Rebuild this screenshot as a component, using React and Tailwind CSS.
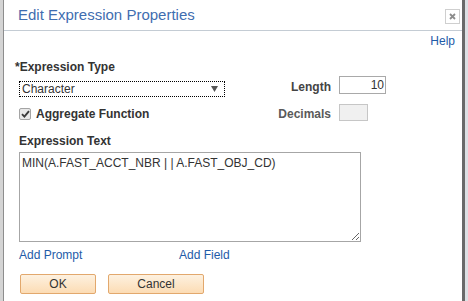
import React from "react";

const CloseBox = () => (
  <div className="mt-[9px] flex h-[15px] w-[15px] items-center justify-center border border-[#cfcfcf] bg-white">
    <svg width="7" height="7" viewBox="0 0 7 7">
      <path d="M1 1L6 6M6 1L1 6" stroke="#8c8c8c" strokeWidth="1.8" />
    </svg>
  </div>
);

const Checkbox = () => (
  <div className="flex h-[12px] w-[12px] items-center justify-center rounded-[2px] border border-[#a4a4a4] bg-[#e8e8e8]">
    <svg width="9" height="8" viewBox="0 0 9 8">
      <path d="M1 4.2L3.4 6.6L8 1.2" stroke="#3a3a3a" strokeWidth="1.9" fill="none" />
    </svg>
  </div>
);

const App = () => {
  return (
    <div className="flex h-[301px] w-[468px] bg-white font-['Liberation_Sans',Arial,sans-serif] text-[12px] text-[#333]">
      <div className="w-[3px] bg-[#d4d4d4]" />
      <div className="flex flex-1 flex-col border-l border-r-[3px] border-l-[#8d8d8d] border-r-[#6a6a6a] bg-white">
        {/* title bar */}
        <div className="flex h-[31px] items-start justify-between border-b border-[#c4ccd4] pl-[14px] pr-[2px]">
          <div className="pt-[6px] text-[15px] leading-[18px] text-[#3f6db0]">
            Edit Expression Properties
          </div>
          <CloseBox />
        </div>

        <div className="flex flex-col pl-[11px] pr-[7px]">
          <div className="mt-[3px] flex justify-end leading-[14px]">
            <a className="cursor-pointer text-[#1e5ba8]">Help</a>
          </div>

          <div className="mt-[12px] flex">
            <div className="w-[214px]">
              <div className="font-bold leading-[14px] text-[#333]">*Expression Type</div>
              <div className="ml-[4px] mt-[7px] flex h-[16px] w-[206px] items-center justify-between border border-dotted border-black pl-[2px] pr-[6px] leading-[14px]">
                <span>Character</span>
                <svg width="7" height="6" viewBox="0 0 7 6">
                  <path d="M0 0H7L3.5 6Z" fill="#555" />
                </svg>
              </div>
              <div className="ml-[4px] mt-[11px] flex h-[12px] items-center gap-[5px]">
                <Checkbox />
                <span className="font-bold leading-[14px] text-[#333]">Aggregate Function</span>
              </div>
            </div>

            <div className="flex flex-col">
              <div className="mt-[16px] flex items-end">
                <span className="w-[102px] text-right font-bold leading-[14px] text-[#444]">Length</span>
                <div className="ml-[8px] flex h-[18px] w-[47px] items-center justify-end border border-[#a9a9a9] pr-[1px] leading-[14px]">
                  10
                </div>
              </div>
              <div className="mt-[10px] flex items-end">
                <span className="w-[102px] text-right font-bold leading-[14px] text-[#5a5a5a]">Decimals</span>
                <div className="ml-[8px] h-[17px] w-[29px] border border-[#c6c6c6] bg-[#f0f0f0]" />
              </div>
            </div>
          </div>

          <div className="ml-[4px] mt-[13px] font-bold leading-[14px] text-[#333]">Expression Text</div>
          <textarea
            readOnly
            defaultValue="MIN(A.FAST_ACCT_NBR | | A.FAST_OBJ_CD)"
            className="ml-[4px] mt-[4px] h-[90px] w-[342px] border border-[#a6a6a6] px-[2px] py-[3px] text-[12px] leading-[14px] text-[#333] outline-none"
          />

          <div className="ml-[4px] mt-[6px] flex leading-[14px] text-[#1e5ba8]">
            <a className="w-[160px] cursor-pointer">Add Prompt</a>
            <a className="cursor-pointer">Add Field</a>
          </div>

          <div className="ml-[5px] mt-[12px] flex gap-[12px]">
            <button className="h-[20px] w-[76px] rounded-[2px] border border-[#e2a86d] bg-gradient-to-b from-[#fdf1e0] to-[#fcdcb4] text-[12px] text-[#333]">
              OK
            </button>
            <button className="h-[20px] w-[96px] rounded-[2px] border border-[#e2a86d] bg-gradient-to-b from-[#fdf1e0] to-[#fcdcb4] text-[12px] text-[#333]">
              Cancel
            </button>
          </div>
        </div>
      </div>
      <div className="w-[3px] bg-[#dde0e4]" />
    </div>
  );
};

export default App;
